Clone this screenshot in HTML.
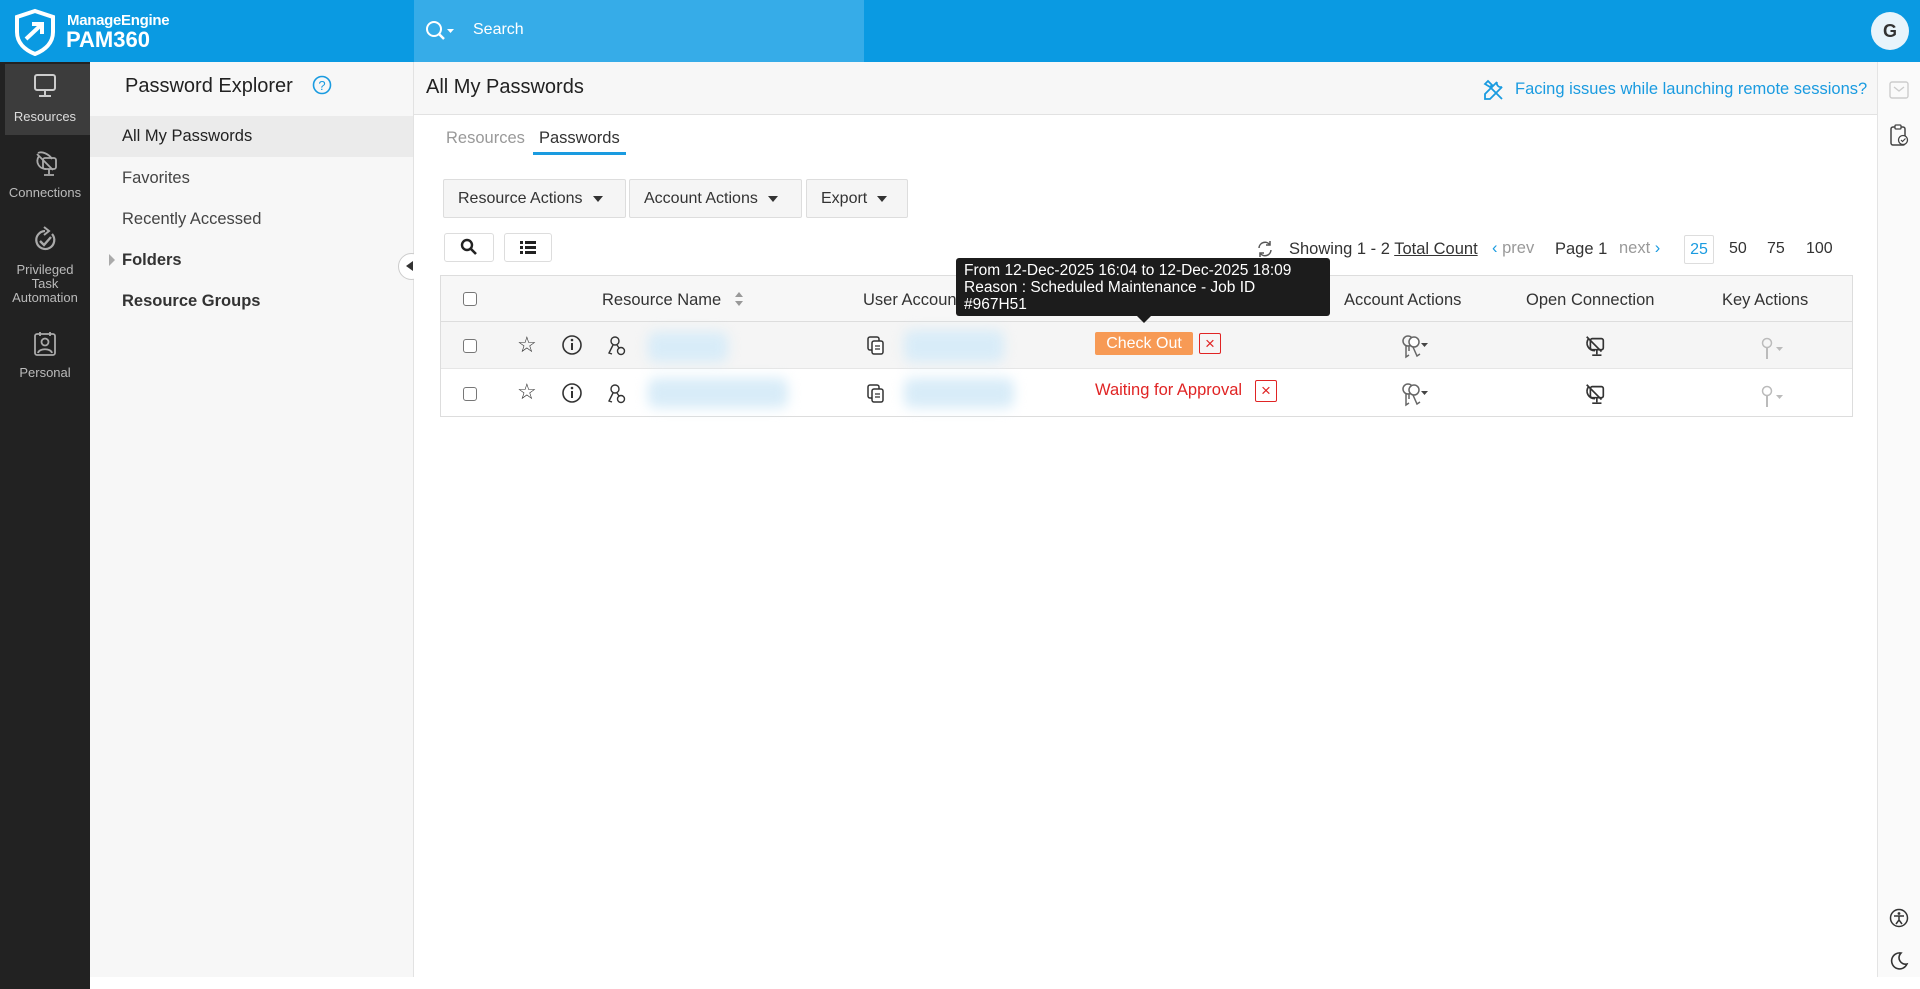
<!DOCTYPE html>
<html><head><meta charset="utf-8"><style>
*{box-sizing:border-box;margin:0;padding:0}
body{width:1920px;height:989px;overflow:hidden;background:#fff;font-family:"Liberation Sans",sans-serif;color:#333;position:relative}
.a{position:absolute}
.hdr{left:0;top:0;width:1920px;height:62px;background:#0a9ae2}
.srch{left:414px;top:0;width:450px;height:62px;background:#36ace8}
.nav{left:0;top:62px;width:90px;height:927px;background:#222}
.exp{left:90px;top:62px;width:324px;height:915px;background:#f7f7f7;border-right:1px solid #e2e2e2}
.main{left:414px;top:62px;width:1463px;height:915px;background:#fff}
.rside{left:1877px;top:62px;width:43px;height:915px;background:#fafafa;border-left:1px solid #e4e4e4}
.t{white-space:nowrap;font-size:16px}
.navl{color:#bbb;font-size:13px;text-align:center;width:90px;left:0;line-height:14px}
.btn{border:1px solid #ddd;background:#f5f5f5;border-radius:2px;height:39px;top:179px;font-size:16px;color:#333;padding-left:14px;line-height:37px}
.caret{display:inline-block;width:0;height:0;border-left:5px solid transparent;border-right:5px solid transparent;border-top:6px solid #333;margin-left:10px;vertical-align:middle}
.cb{width:14px;height:14px;border:1.5px solid #777;border-radius:3px;background:#fff}
.blur{background:#d8ecf8;filter:blur(6px);border-radius:8px}
</style></head><body>
<div class="a hdr"></div>
<div class="a srch"></div>
<svg class="a" style="left:12px;top:8px" width="46" height="48" viewBox="0 0 46 48"><path d="M23 3 L41 9 V24 C41 35 33 42 23 46 C13 42 5 35 5 24 V9 Z" fill="none" stroke="#fff" stroke-width="4"/><path d="M14 31 L29 17 M20 16 H30 V26" fill="none" stroke="#fff" stroke-width="4"/></svg>
<div class="a t" style="left:67px;top:12px;color:#fff;font-size:15px;font-weight:bold;letter-spacing:-.3px">ManageEngine</div>
<div class="a t" style="left:66px;top:27px;color:#fff;font-size:22px;font-weight:bold">PAM360</div>
<svg class="a" style="left:425px;top:20px" width="32" height="22" viewBox="0 0 32 22"><circle cx="9" cy="9" r="7" fill="none" stroke="#fff" stroke-width="2"/><path d="M14 14 L19 19" stroke="#fff" stroke-width="2.5"/><path d="M22 9 h7 l-3.5 4z" fill="#fff"/></svg>
<div class="a t" style="left:473px;top:21px;color:#fff;font-size:16px">Search</div>
<div class="a" style="left:1871px;top:12px;width:38px;height:38px;border-radius:50%;background:#e8f4fb;color:#333;font-size:18px;font-weight:bold;text-align:center;line-height:38px">G</div>

<div class="a nav"></div>
<div class="a" style="left:5px;top:64px;width:85px;height:71px;background:#3c3c3c"></div>
<svg class="a" style="left:33px;top:73px" width="24" height="26" viewBox="0 0 24 26"><rect x="2" y="2" width="20" height="15" rx="2" fill="none" stroke="#ccc" stroke-width="2"/><path d="M12 17 V22 M6 23 H18" stroke="#ccc" stroke-width="2"/></svg>
<div class="a navl" style="top:110px;color:#ddd">Resources</div>
<svg class="a" style="left:33px;top:150px" width="26" height="28" viewBox="0 0 26 28"><path d="M4 4 L20 20 M6 6 C2 12 6 19 13 19 M5 3 C9 1 16 4 19 9" fill="none" stroke="#aaa" stroke-width="1.8"/><rect x="10" y="8" width="13" height="11" rx="2" fill="none" stroke="#aaa" stroke-width="1.8"/><path d="M16 19 V24 M11 25 H21" stroke="#aaa" stroke-width="1.8"/></svg>
<div class="a navl" style="top:186px">Connections</div>
<svg class="a" style="left:32px;top:226px" width="26" height="28" viewBox="0 0 26 28"><path d="M20 8 A9 9 0 1 1 13 5" fill="none" stroke="#aaa" stroke-width="2.2"/><path d="M12 1 L17 5 L12 9" fill="none" stroke="#aaa" stroke-width="2"/><path d="M8 15 L12 19 L19 11" fill="none" stroke="#aaa" stroke-width="2.4"/></svg>
<div class="a navl" style="top:263px">Privileged<br>Task<br>Automation</div>
<svg class="a" style="left:33px;top:331px" width="24" height="26" viewBox="0 0 24 26"><rect x="2" y="3" width="20" height="21" rx="2" fill="none" stroke="#aaa" stroke-width="1.8"/><path d="M7 1 V5 M17 1 V5" stroke="#aaa" stroke-width="1.8"/><circle cx="12" cy="11" r="3.5" fill="none" stroke="#aaa" stroke-width="1.8"/><path d="M5 22 C6 17 18 17 19 22" fill="none" stroke="#aaa" stroke-width="1.8"/></svg>
<div class="a navl" style="top:366px">Personal</div>

<div class="a exp"></div>
<div class="a t" style="left:125px;top:75px;font-size:20px;color:#222">Password Explorer</div>
<svg class="a" style="left:312px;top:75px" width="20" height="20"><circle cx="10" cy="10" r="8.5" fill="none" stroke="#1a9be0" stroke-width="1.6"/><text x="10" y="15" font-size="13" text-anchor="middle" fill="#1a9be0" font-family="Liberation Sans">?</text></svg>
<div class="a" style="left:90px;top:116px;width:323px;height:41px;background:#ebebeb"></div>
<div class="a t" style="left:122px;top:127px;color:#222;font-size:16.5px">All My Passwords</div>
<div class="a t" style="left:122px;top:169px;color:#444;font-size:16.5px">Favorites</div>
<div class="a t" style="left:122px;top:210px;color:#444;font-size:16.5px">Recently Accessed</div>
<div class="a" style="left:109px;top:254px;width:0;height:0;border-top:6px solid transparent;border-bottom:6px solid transparent;border-left:6px solid #aaa"></div>
<div class="a t" style="left:122px;top:251px;font-weight:bold;color:#333;font-size:16.5px">Folders</div>
<div class="a t" style="left:122px;top:292px;font-weight:bold;color:#333;font-size:16.5px">Resource Groups</div>
<div class="a" style="left:398px;top:253px;width:27px;height:27px;border-radius:50%;background:#fff;border:1px solid #ccc"></div>
<div class="a" style="left:406px;top:261px;width:0;height:0;border-top:5px solid transparent;border-bottom:5px solid transparent;border-right:7px solid #333"></div>

<div class="a main"></div>
<div class="a" style="left:414px;top:62px;width:1463px;height:53px;background:#f7f7f7;border-bottom:1px solid #e2e2e2"></div>
<div class="a t" style="left:426px;top:76px;font-size:20px;color:#222">All My Passwords</div>
<svg class="a" style="left:1482px;top:78px" width="24" height="24" viewBox="0 0 24 24"><path d="M3 6 L6 3 L10 7 L8 9 Z M8 9 L20 21 M15 4 A4 4 0 0 0 20 9 L8 21 L3 21 L3 16 L15 4" fill="none" stroke="#1a9be0" stroke-width="1.8"/></svg>
<div class="a t" style="left:1515px;top:80px;color:#1a9be0;font-size:16.5px">Facing issues while launching remote sessions?</div>

<div class="a t" style="left:446px;top:129px;color:#999;font-size:16.5px">Resources</div>
<div class="a t" style="left:539px;top:129px;color:#333;font-size:16.5px">Passwords</div>
<div class="a" style="left:533px;top:152px;width:93px;height:3px;background:#1a9be0"></div>

<div class="a btn" style="left:443px;width:183px">Resource Actions<span class="caret"></span></div>
<div class="a btn" style="left:629px;width:173px">Account Actions<span class="caret"></span></div>
<div class="a btn" style="left:806px;width:102px">Export<span class="caret"></span></div>
<div class="a" style="left:444px;top:233px;width:50px;height:29px;border:1px solid #ddd;border-radius:3px;background:#fff"></div>
<svg class="a" style="left:460px;top:238px" width="18" height="18"><circle cx="7" cy="7" r="5" fill="none" stroke="#222" stroke-width="2.4"/><path d="M11 11 L16 16" stroke="#222" stroke-width="2.6"/></svg>
<div class="a" style="left:504px;top:233px;width:48px;height:29px;border:1px solid #ddd;border-radius:3px;background:#fff"></div>
<svg class="a" style="left:520px;top:240px" width="16" height="14"><path d="M0 1h3v3H0zM5 1h11v3H5zM0 6h3v3H0zM5 6h11v3H5zM0 11h3v3H0zM5 11h11v3H5z" fill="#222"/></svg>

<svg class="a" style="left:1256px;top:240px" width="18" height="18"><path d="M3 8 A6 6 0 0 1 14 5 M15 10 A6 6 0 0 1 4 13" fill="none" stroke="#555" stroke-width="1.5"/><path d="M14 1 V5 H10 M4 17 V13 H8" fill="none" stroke="#555" stroke-width="1.5"/></svg>
<div class="a t" style="left:1289px;top:240px;font-size:16.5px">Showing 1 - 2 <span style="text-decoration:underline">Total Count</span></div>
<div class="a t" style="left:1492px;top:239px;color:#1a9be0;font-size:16.5px">&#8249; <span style="color:#999">prev</span></div>
<div class="a t" style="left:1555px;top:240px;font-size:16.5px">Page 1</div>
<div class="a t" style="left:1619px;top:239px;color:#999;font-size:16.5px">next <span style="color:#1a9be0">&#8250;</span></div>
<div class="a t" style="left:1684px;top:235px;width:30px;height:29px;border:1px solid #ddd;border-radius:2px;color:#1a9be0;text-align:center;line-height:28px">25</div>
<div class="a t" style="left:1729px;top:240px">50</div>
<div class="a t" style="left:1767px;top:240px">75</div>
<div class="a t" style="left:1806px;top:240px">100</div>

<div class="a" style="left:440px;top:275px;width:1413px;height:142px;border:1px solid #ddd;background:#fff"></div>
<div class="a" style="left:441px;top:276px;width:1411px;height:46px;background:#f7f7f7;border-bottom:1px solid #ddd"></div>
<div class="a" style="left:441px;top:322px;width:1411px;height:47px;background:#f5f5f5;border-bottom:1px solid #e6e6e6"></div>
<div class="a cb" style="left:463px;top:292px"></div>
<div class="a t" style="left:602px;top:291px;font-size:16.5px">Resource Name</div>
<svg class="a" style="left:734px;top:291px" width="10" height="16"><path d="M5 1 L9 6 H1z M5 15 L9 10 H1z" fill="#999"/></svg>
<div class="a t" style="left:863px;top:291px;font-size:16.5px">User Accoun</div>
<div class="a t" style="left:1344px;top:291px;font-size:16.5px">Account Actions</div>
<div class="a t" style="left:1526px;top:291px;font-size:16.5px">Open Connection</div>
<div class="a t" style="left:1722px;top:291px;font-size:16.5px">Key Actions</div>

<div class="a cb" style="left:463px;top:339px"></div>
<div class="a cb" style="left:463px;top:387px"></div>
<div class="a t" style="left:517px;top:332px;font-size:22px;color:#333">☆</div>
<div class="a t" style="left:517px;top:379px;font-size:22px;color:#333">☆</div>
<svg class="a" style="left:561px;top:334px" width="22" height="22"><circle cx="11" cy="11" r="9" fill="none" stroke="#333" stroke-width="1.6"/><path d="M11 9 V16" stroke="#333" stroke-width="2"/><circle cx="11" cy="6" r="1.3" fill="#333"/></svg>
<svg class="a" style="left:561px;top:382px" width="22" height="22"><circle cx="11" cy="11" r="9" fill="none" stroke="#333" stroke-width="1.6"/><path d="M11 9 V16" stroke="#333" stroke-width="2"/><circle cx="11" cy="6" r="1.3" fill="#333"/></svg>
<svg class="a" style="left:606px;top:335px" width="22" height="22"><circle cx="9" cy="6" r="4" fill="none" stroke="#333" stroke-width="1.4"/><path d="M7 10 L3 18 L6 19 M11 10 L13 13" fill="none" stroke="#333" stroke-width="1.4"/><circle cx="15" cy="16" r="3.5" fill="none" stroke="#333" stroke-width="1.4"/></svg>
<svg class="a" style="left:606px;top:383px" width="22" height="22"><circle cx="9" cy="6" r="4" fill="none" stroke="#333" stroke-width="1.4"/><path d="M7 10 L3 18 L6 19 M11 10 L13 13" fill="none" stroke="#333" stroke-width="1.4"/><circle cx="15" cy="16" r="3.5" fill="none" stroke="#333" stroke-width="1.4"/></svg>
<div class="a blur" style="left:648px;top:332px;width:80px;height:30px"></div>
<div class="a blur" style="left:648px;top:378px;width:140px;height:30px"></div>
<svg class="a" style="left:866px;top:335px" width="20" height="22"><rect x="2" y="2" width="11" height="13" rx="2" fill="none" stroke="#333" stroke-width="1.5"/><rect x="6" y="6" width="11" height="13" rx="2" fill="#fff" stroke="#333" stroke-width="1.5"/><path d="M9 11h5M9 14h5" stroke="#333" stroke-width="1.2"/></svg>
<svg class="a" style="left:866px;top:383px" width="20" height="22"><rect x="2" y="2" width="11" height="13" rx="2" fill="none" stroke="#333" stroke-width="1.5"/><rect x="6" y="6" width="11" height="13" rx="2" fill="#fff" stroke="#333" stroke-width="1.5"/><path d="M9 11h5M9 14h5" stroke="#333" stroke-width="1.2"/></svg>
<div class="a blur" style="left:904px;top:330px;width:100px;height:32px"></div>
<div class="a blur" style="left:904px;top:378px;width:110px;height:30px"></div>
<div class="a t" style="left:1095px;top:332px;width:98px;height:23px;background:#f79a55;color:#fff;border-radius:2px;text-align:center;line-height:23px">Check Out</div>
<div class="a t" style="left:1199px;top:333px;width:22px;height:21px;border:1.5px solid #e02424;border-radius:2px;color:#e02424;text-align:center;line-height:19px;font-size:17px">×</div>
<div class="a t" style="left:1095px;top:381px;color:#e02424;font-size:16.5px">Waiting for Approval</div>
<div class="a t" style="left:1255px;top:380px;width:22px;height:22px;border:1.5px solid #e02424;border-radius:2px;color:#e02424;text-align:center;line-height:20px;font-size:17px">×</div>
<svg class="a" style="left:1400px;top:334px" width="30" height="26" viewBox="0 0 30 26"><circle cx="8" cy="7" r="5" fill="none" stroke="#666" stroke-width="1.5"/><path d="M6 12 V23 L9 21 M9 12 V17" fill="none" stroke="#666" stroke-width="1.5"/><circle cx="14" cy="8" r="5" fill="#fff" stroke="#666" stroke-width="1.5"/><path d="M13 13 L17 22 L20 20" fill="none" stroke="#666" stroke-width="1.5"/><path d="M21 9 h7 l-3.5 4z" fill="#444"/></svg>
<svg class="a" style="left:1400px;top:382px" width="30" height="26" viewBox="0 0 30 26"><circle cx="8" cy="7" r="5" fill="none" stroke="#666" stroke-width="1.5"/><path d="M6 12 V23 L9 21 M9 12 V17" fill="none" stroke="#666" stroke-width="1.5"/><circle cx="14" cy="8" r="5" fill="#fff" stroke="#666" stroke-width="1.5"/><path d="M13 13 L17 22 L20 20" fill="none" stroke="#666" stroke-width="1.5"/><path d="M21 9 h7 l-3.5 4z" fill="#444"/></svg>
<svg class="a" style="left:1583px;top:333px" width="24" height="26" viewBox="0 0 26 28"><path d="M4 4 L20 20 M6 6 C2 12 6 19 13 19" fill="none" stroke="#333" stroke-width="1.8"/><rect x="8" y="6" width="14" height="12" rx="2" fill="none" stroke="#333" stroke-width="1.8"/><path d="M15 18 V23 M10 24 H20" stroke="#333" stroke-width="1.8"/></svg>
<svg class="a" style="left:1583px;top:381px" width="24" height="26" viewBox="0 0 26 28"><path d="M4 4 L20 20 M6 6 C2 12 6 19 13 19" fill="none" stroke="#333" stroke-width="1.8"/><rect x="8" y="6" width="14" height="12" rx="2" fill="none" stroke="#333" stroke-width="1.8"/><path d="M15 18 V23 M10 24 H20" stroke="#333" stroke-width="1.8"/></svg>
<svg class="a" style="left:1760px;top:337px" width="26" height="24"><circle cx="7" cy="6" r="4.5" fill="none" stroke="#bbb" stroke-width="1.5"/><path d="M7 11 V22" stroke="#bbb" stroke-width="2"/><path d="M16 10 h7 l-3.5 4z" fill="#bbb"/></svg>
<svg class="a" style="left:1760px;top:385px" width="26" height="24"><circle cx="7" cy="6" r="4.5" fill="none" stroke="#bbb" stroke-width="1.5"/><path d="M7 11 V22" stroke="#bbb" stroke-width="2"/><path d="M16 10 h7 l-3.5 4z" fill="#bbb"/></svg>

<div class="a" style="left:956px;top:258px;width:374px;height:58px;background:#1c1c1c;border-radius:3px;color:#fff;font-size:15.5px;line-height:17px;padding:4px 8px;white-space:nowrap">From 12-Dec-2025 16:04 to 12-Dec-2025 18:09<br>Reason : Scheduled Maintenance - Job ID<br>#967H51</div>
<div class="a" style="left:1137px;top:316px;width:0;height:0;border-left:7px solid transparent;border-right:7px solid transparent;border-top:7px solid #1c1c1c"></div>

<div class="a rside"></div>
<svg class="a" style="left:1889px;top:81px" width="20" height="18"><rect x="1" y="1" width="18" height="16" rx="2" fill="none" stroke="#ccc" stroke-width="1.4"/><path d="M5 6 L10 10 L15 6" fill="none" stroke="#ccc" stroke-width="1.4"/></svg>
<svg class="a" style="left:1889px;top:123px" width="20" height="24"><rect x="2" y="4" width="14" height="18" rx="2" fill="none" stroke="#444" stroke-width="1.5"/><rect x="6" y="2" width="6" height="4" rx="1" fill="#fff" stroke="#444" stroke-width="1.3"/><circle cx="14" cy="17" r="4.5" fill="#fff" stroke="#444" stroke-width="1.3"/><path d="M12 17 l1.5 1.5 l3 -3" fill="none" stroke="#444" stroke-width="1.2"/></svg>
<svg class="a" style="left:1889px;top:908px" width="20" height="20"><circle cx="10" cy="10" r="8.5" fill="none" stroke="#333" stroke-width="1.5"/><circle cx="10" cy="5.5" r="1.4" fill="#333"/><path d="M5 8 H15 M10 8 V12 L7 16 M10 12 L13 16" fill="none" stroke="#333" stroke-width="1.5"/></svg>
<svg class="a" style="left:1889px;top:951px" width="20" height="20"><path d="M12 2 A8 8 0 1 0 18 13 A6.5 6.5 0 0 1 12 2 Z" fill="none" stroke="#333" stroke-width="1.6"/></svg>
</body></html>
